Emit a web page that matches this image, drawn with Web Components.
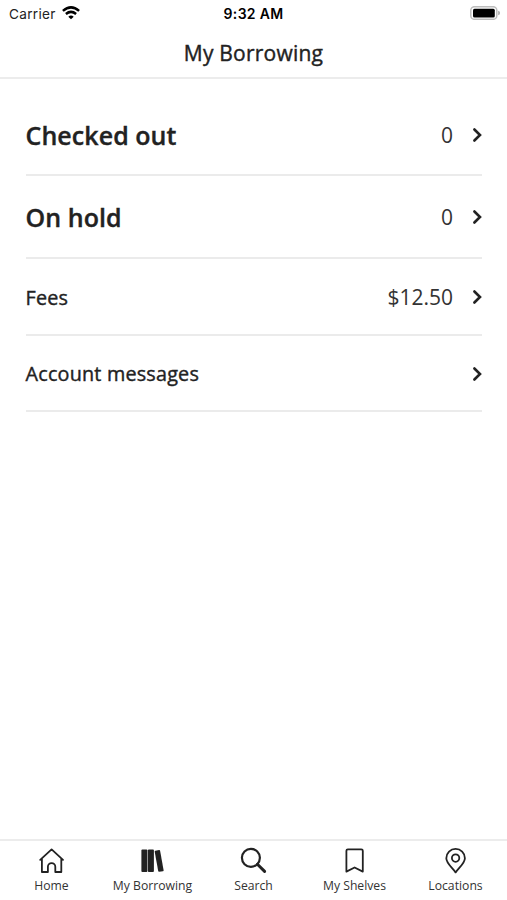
<!DOCTYPE html>
<html lang="en">
<head>
<meta charset="utf-8">
<title>My Borrowing</title>
<style>
html, body { margin: 0; height: 100%; background: #fff; }
body { font-family: "Open Sans", "Noto Sans", sans-serif; color: #222; overflow: hidden; }
</style>
</head>
<body>
<borrowing-app></borrowing-app>
<script>
const define = (name, html) => customElements.define(name, class extends HTMLElement {
  constructor() {
    super();
    this.attachShadow({ mode: 'open' }).innerHTML = html;
  }
});

define('status-bar', `
<style>
:host { display: grid; grid-template-columns: 1fr auto 1fr; align-items: center; height: 27px; box-sizing: border-box; padding: 0 7px 0 9px; font-family: Inter, "Liberation Sans", sans-serif; font-size: 13.6px; color: #222; }
.left { display: flex; align-items: center; gap: 6px; letter-spacing: .3px; }
.time { font-weight: 600; font-size: 14px; color: #000; letter-spacing: .3px; margin-right: 2px; }
.right { justify-self: end; display: flex; margin-top: -1px; }
svg { display: block; }
.left svg { margin-top: -2px; }
</style>
<div class="left"><span>Carrier</span>
<svg width="18" height="14" viewBox="0 0 18 14" fill="none" stroke="#000" stroke-width="2.5"><path d="M.9 4.9Q9-2.1 17.1 4.9M3.9 8Q9 3.8 14.1 8"/><path d="M9 13.3 6.3 10.7Q9 8.4 11.7 10.7Z" fill="#000" stroke="none"/></svg></div>
<div class="time">9:32 AM</div>
<div class="right"><svg width="30" height="14" viewBox="0 0 30 14"><rect x=".8" y=".7" width="26" height="12.6" rx="3.6" fill="#fff" stroke="#bdbdbd" stroke-width="1.5"/><rect x="3" y="2.7" width="21.8" height="8.8" rx="1.5"/><path d="M28.2 4.8Q30 5.2 30 7T28.2 9.2Z" fill="#aaa"/></svg></div>`);

define('page-title', `
<style>
:host { display: flex; align-items: center; justify-content: center; height: 52px; box-sizing: border-box; padding-top: 1px; border-bottom: 2px solid #ececec; font-size: 21px; font-weight: 400; letter-spacing: .22px; -webkit-text-stroke: .4px currentColor; }
</style><span><slot></slot></span>`);

define('chevron-icon', `
<style>:host { display: block; } svg { display: block; }</style>
<svg width="10" height="16" viewBox="0 0 10 16" fill="none" stroke="#222" stroke-width="2.6" stroke-linecap="round" stroke-linejoin="miter"><path d="M2.4 2.5 8 8 2.4 13.5"/></svg>`);

define('list-row', `
<style>
:host { display: flex; align-items: center; box-sizing: border-box; height: 77px; padding-top: 1px; border-bottom: 2px solid #ebebeb; }
.label { flex: 1; font-size: 19.8px; letter-spacing: .2px; -webkit-text-stroke: .4px currentColor; }
:host([large]) { height: 82px; }
:host([large]) .label { font-size: 25px; font-weight: 600; letter-spacing: .06px; -webkit-text-stroke-width: .35px; }
.value { font-size: 21px; color: #333; margin-right: 19px; }
</style>
<span class="label"><slot></slot></span><span class="value"><slot name="value"></slot></span><chevron-icon></chevron-icon>`);

define('tab-item', `
<style>
:host { display: flex; flex-direction: column; align-items: center; width: 101px; font-size: 12.2px; color: #333; white-space: nowrap; }
.icon { height: 28px; }
.label { line-height: 17px; margin-top: 2px; }
::slotted(svg) { display: block; fill: none; stroke: #222; stroke-width: 1.8; stroke-linejoin: round; stroke-linecap: round; }
</style>
<span class="icon"><slot name="icon"></slot></span><span class="label"><slot></slot></span>`);

define('tab-bar', `
<style>
:host { display: flex; justify-content: center; box-sizing: border-box; height: 61px; padding-top: 6px; border-top: 2px solid #ececec; }
</style>
<tab-item>Home<svg slot="icon" width="28" height="28" viewBox="0.4 0.4 28 28"><path d="M2.6 13.2 14 2.8l11.4 10.4M4.3 12v13.4h6v-5.2a3.7 3.7 0 0 1 7.4 0v5.2h6V12"/></svg></tab-item>
<tab-item>My Borrowing<svg slot="icon" width="28" height="28" viewBox="0.4 0.4 28 28"><g fill="#222" stroke="none"><rect x="2.8" y="2.9" width="6" height="22.4" rx=".9"/><rect x="9.3" y="2.9" width="6" height="22.4" rx=".9"/><path d="M16.8 4.2 20.5 3.5Q21.3 3.4 21.5 4.2L25 23.6Q25.1 24.4 24.3 24.6L20.6 25.2Q19.8 25.3 19.6 24.5L16.1 5.1Q16 4.4 16.8 4.2Z"/></g></svg></tab-item>
<tab-item>Search<svg slot="icon" width="28" height="28" viewBox="0.4 0.2 28 28"><circle cx="11.3" cy="11" r="9" stroke-width="2.2"/><path d="M17.8 17.5 25 24.6" stroke-width="3"/></svg></tab-item>
<tab-item>My Shelves<svg slot="icon" width="28" height="28" viewBox="0.4 0.4 28 28"><path d="M5.8 25V4.2Q5.8 2.7 7.3 2.7h13.4Q22.2 2.7 22.2 4.2V25L14 20.9Z"/></svg></tab-item>
<tab-item>Locations<svg slot="icon" width="28" height="28" viewBox="0.4 0.4 28 28"><path d="M14 25.8C11 21.2 4.7 16.8 4.7 11.6a9.3 9.3 0 0 1 18.6 0C23.3 16.8 17 21.2 14 25.8Z"/><circle cx="14" cy="11.5" r="3.7"/></svg></tab-item>`);

define('borrowing-app', `
<style>
:host { display: flex; flex-direction: column; height: 100vh; }
main { flex: 1; padding: 15px 25px 0 25.5px; }
.hold { height: 83px; }
.fees { height: 77px; }
.messages { height: 76px; }
</style>
<status-bar></status-bar>
<page-title>My Borrowing</page-title>
<main>
<list-row large>Checked out<span slot="value">0</span></list-row>
<list-row large class="hold">On hold<span slot="value">0</span></list-row>
<list-row class="fees">Fees<span slot="value">$12.50</span></list-row>
<list-row class="messages">Account messages</list-row>
</main>
<tab-bar></tab-bar>`);
</script>
</body>
</html>
